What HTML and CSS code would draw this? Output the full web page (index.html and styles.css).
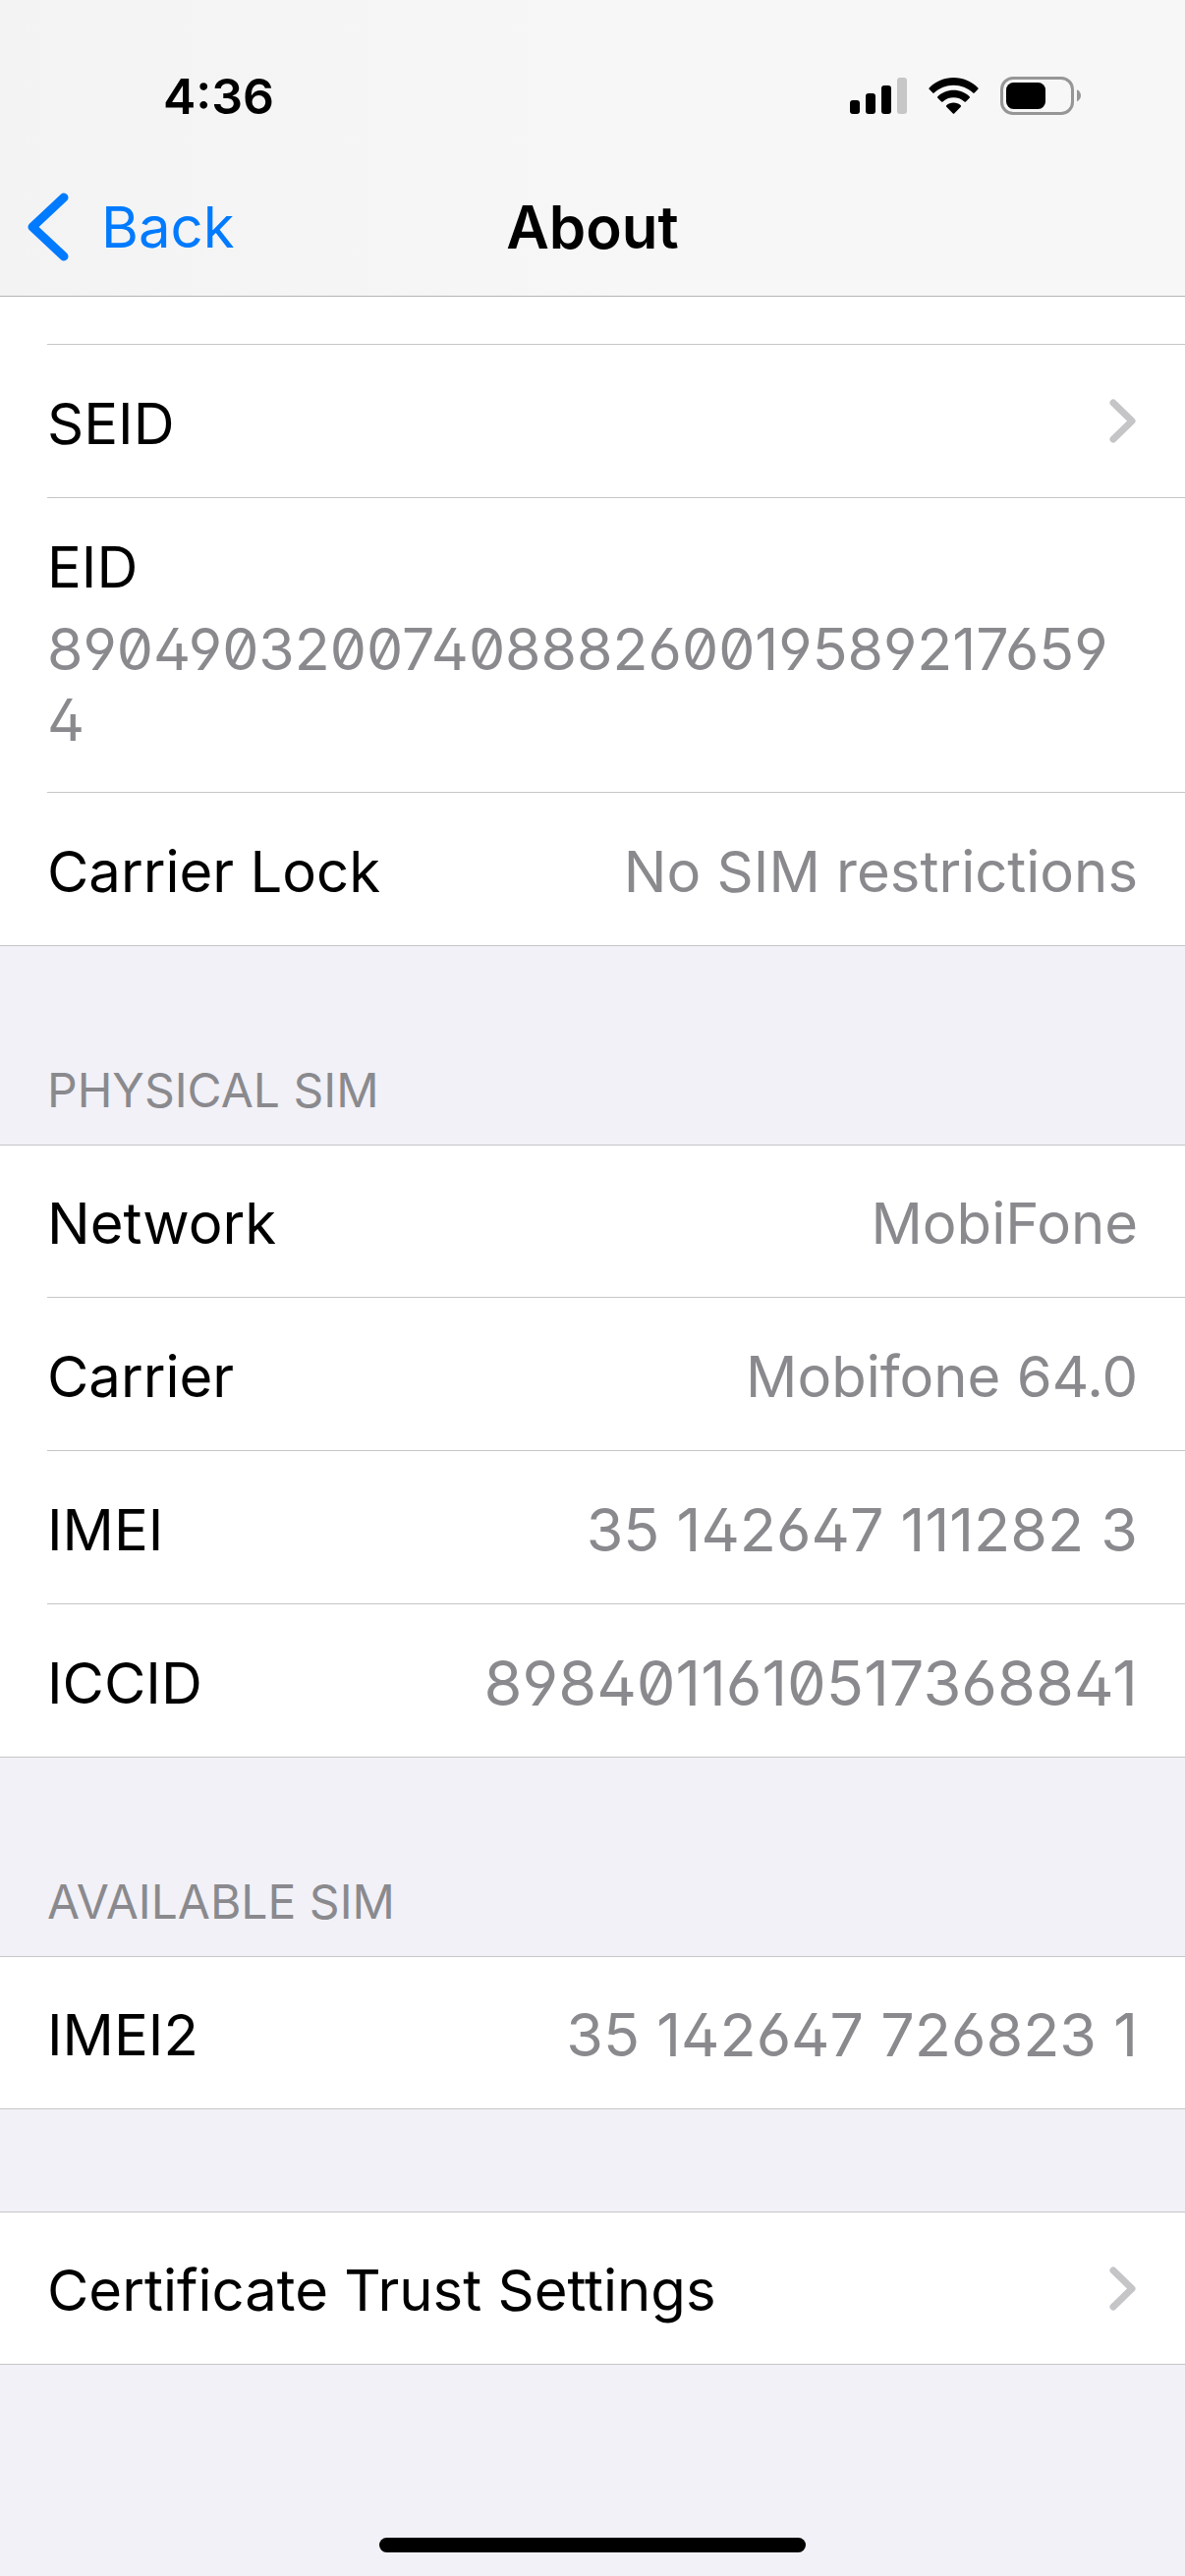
FILE: index.html
```html
<!DOCTYPE html>
<html lang="en">
<head>
<meta charset="utf-8">
<meta name="viewport" content="width=device-width, initial-scale=1">
<title>About</title>
<link rel="stylesheet" href="styles.css">
</head>
<body>
<header class="header">
  <div class="status">
    <time class="status-time">4:36</time>
    <div class="status-icons">
      <svg class="icon-signal" width="58" height="37" viewBox="0 0 58 37" role="img" aria-label="Signal">
        <rect x="0" y="23" width="10" height="14" rx="3"/>
        <rect x="16" y="16" width="10" height="21" rx="3"/>
        <rect x="32" y="8" width="10" height="29" rx="3"/>
        <rect x="48" y="0" width="10" height="37" rx="3" fill="#c6c6c6"/>
      </svg>
      <svg class="icon-wifi" width="51" height="37" viewBox="0 0 51 37" role="img" aria-label="Wi-Fi">
        <path d="M0.6 10.4C7.200 3.900 16 0 25.500 0S43.800 3.900 50.400 10.400C50.800 10.800 50.800 11.400 50.400 11.800L46.700 15.600C46.300 16 45.700 16 45.300 15.600C40 10.500 33 7.700 25.500 7.700S11 10.500 5.700 15.600C5.300 16 4.700 16 4.300 15.600L0.600 11.800C0.200 11.400 0.200 10.800 0.600 10.400Z"/>
        <path d="M9.300 19.300C13.600 15.200 19.300 12.800 25.500 12.800S37.400 15.200 41.700 19.300C42.100 19.700 42.100 20.300 41.700 20.700L37.900 24.500C37.500 24.900 36.900 24.900 36.500 24.500C33.600 21.800 29.700 20.300 25.500 20.300S17.400 21.800 14.500 24.500C14.100 24.900 13.500 24.900 13.100 24.500L9.300 20.700C8.900 20.300 8.900 19.700 9.300 19.300Z"/>
        <path d="M18.200 28.300C20.200 26.600 22.700 25.600 25.500 25.600S30.800 26.600 32.800 28.300C33.200 28.700 33.200 29.300 32.800 29.700L26.200 36.500C25.800 36.900 25.200 36.900 24.800 36.500L18.200 29.700C17.800 29.300 17.800 28.700 18.200 28.300Z"/>
      </svg>
      <svg class="icon-battery" width="82" height="39" viewBox="0 0 82 39" role="img" aria-label="Battery">
        <rect x="1.500" y="1.500" width="72" height="36" rx="11.500" fill="none" stroke="#969696" stroke-width="3"/>
        <rect x="6" y="6" width="40" height="27" rx="7.500"/>
        <path d="M78 13.200C80.500 14.200 82 16.600 82 19.200S80.500 24.200 78 25.200Z" fill="#969696"/>
      </svg>
    </div>
  </div>
  <nav class="nav">
    <a class="back" href="#general">
      <svg width="42" height="70" viewBox="0 0 42 70" aria-hidden="true"><path d="M37 5L5 35L37 65" fill="none" stroke="#007aff" stroke-width="9" stroke-linecap="round" stroke-linejoin="round"/></svg>
      <span>Back</span>
    </a>
    <h1 class="title">About</h1>
  </nav>
</header>

<main>
  <ul class="group group-scrolled">
    <li class="row">
      <a class="row-body" href="#seid"><span>SEID</span>
        <svg class="disclosure" width="29" height="45" viewBox="0 0 29 45" aria-hidden="true"><path class="chevron" d="M4 4L23 22.500L4 41"/></svg></a>
    </li>
    <li class="row">
      <div class="row-body row-stacked"><span>EID</span><span class="value number-wrapped">89049032007408882600195892176594</span></div>
    </li>
    <li class="row">
      <div class="row-body"><span>Carrier Lock</span><span class="value">No SIM restrictions</span></div>
    </li>
  </ul>

  <h2 class="group-title">PHYSICAL SIM</h2>
  <ul class="group">
    <li class="row"><div class="row-body"><span>Network</span><span class="value">MobiFone</span></div></li>
    <li class="row"><div class="row-body"><span>Carrier</span><span class="value">Mobifone 64.0</span></div></li>
    <li class="row"><div class="row-body"><span>IMEI</span><span class="value number">35 142647 111282 3</span></div></li>
    <li class="row"><div class="row-body"><span>ICCID</span><span class="value number-long">8984011610517368841</span></div></li>
  </ul>

  <h2 class="group-title">AVAILABLE SIM</h2>
  <ul class="group">
    <li class="row"><div class="row-body"><span>IMEI2</span><span class="value number">35 142647 726823 1</span></div></li>
  </ul>

  <ul class="group group-spaced">
    <li class="row">
      <a class="row-body" href="#certificates"><span>Certificate Trust Settings</span>
        <svg class="disclosure" width="29" height="45" viewBox="0 0 29 45" aria-hidden="true"><path class="chevron" d="M4 4L23 22.500L4 41"/></svg></a>
    </li>
  </ul>
</main>
<div class="home-indicator"></div>
</body>
</html>
```
FILE: styles.css
```css
* {
  box-sizing: border-box;
}

body {
  display: flex;
  flex-direction: column;
  min-height: 100vh;
  margin: 0;
  background: #f2f1f7;
  color: #000;
  font-family: Inter, "Liberation Sans", sans-serif;
  font-size: 58px;
  line-height: 72px;
}

a {
  color: inherit;
  text-decoration: none;
}

svg {
  display: block;
  flex: none;
}

.header {
  background: linear-gradient(90deg, #f3f3f3, #f7f7f7 55%);
  border-bottom: 1px solid #b4b4b6;
}

.status {
  display: flex;
  align-items: center;
  justify-content: space-between;
  height: 161px;
  padding: 34px 106px 0 166px;
}

.status-time {
  font-size: 50px;
  font-weight: 600;
}

.status-icons {
  display: flex;
  align-items: center;
  gap: 22px;
}

.nav {
  display: grid;
  grid-template-columns: 1fr auto 1fr;
  align-items: center;
  height: 140px;
  padding: 0 28px;
}

.back {
  display: flex;
  align-items: center;
  gap: 33px;
  color: #007aff;
}

.title {
  margin: 0;
  font-size: 60px;
  font-weight: 600;
}

.group {
  margin: 0;
  padding: 0;
  list-style: none;
  background: #fff;
  border: solid #c6c6c8;
  border-width: 1px 0;
}

.group-scrolled {
  padding-top: 48px;
  border-top: 0;
}

.group-spaced {
  margin-top: 104px;
}

.row {
  padding-left: 48px;
}

.row-body {
  display: flex;
  align-items: center;
  justify-content: space-between;
  min-height: 154px;
  padding: 4px 48px 0 0;
}

.row + .row .row-body,
.group-scrolled .row-body {
  min-height: 156px;
  border-top: 1px solid #c6c6c8;
}

.row-stacked {
  flex-direction: column;
  align-items: flex-start;
  justify-content: flex-start;
  gap: 12px;
  padding: 34px 48px 37px 0;
}

.value {
  color: #8a8a8e;
}

.number,
.number-long,
.number-wrapped {
  font-feature-settings: "zero", "cv02", "cv03", "cv04";
}

.number {
  font-size: 61px;
}

.number-long {
  font-size: 63px;
}

.number-wrapped {
  font-size: 59px;
  word-break: break-all;
}

.group-title {
  margin: 0;
  padding: 117px 48px 25px;
  color: #8a8a8e;
  font-size: 48px;
  font-weight: 400;
  line-height: 60px;
}

.disclosure {
  margin-bottom: 4px;
}

.chevron {
  fill: none;
  stroke: #c5c5c7;
  stroke-width: 7;
  stroke-linecap: round;
  stroke-linejoin: round;
}

.home-indicator {
  width: 36%;
  height: 15px;
  margin: auto auto 24px;
  border-radius: 8px;
  background: #000;
}
```
